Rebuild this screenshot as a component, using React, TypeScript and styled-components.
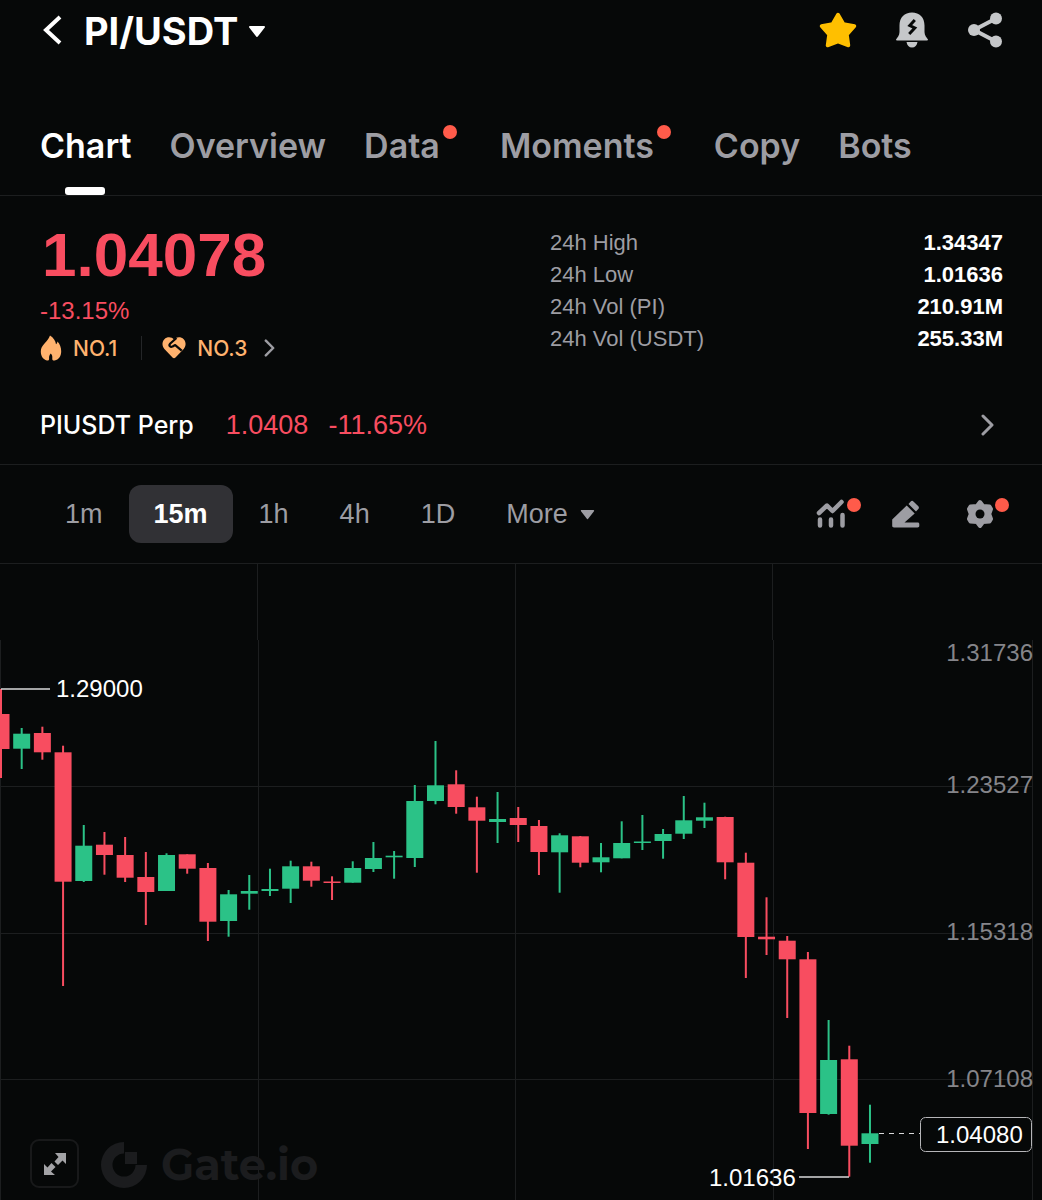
import React from "react";
import styled, { createGlobalStyle } from "styled-components";

const color = {
  page: "#060808",
  line: "#1c1e1f",
  white: "#ffffff",
  muted: "#9d9da3",
  axis: "#85858a",
  red: "#f84d60",
  green: "#2bc287",
  orange: "#ffb26e",
  badge: "#ff5b4a",
  pill: "#313135",
};

const sans = `Inter, "Liberation Sans", Arial, sans-serif`;
const figures = `"Liberation Sans", Arial, sans-serif`;

const GlobalStyle = createGlobalStyle`
  * { box-sizing: border-box; }
  body {
    margin: 0;
    background: ${color.page};
    color: ${color.white};
    font-family: ${sans};
  }
  button {
    margin: 0;
    padding: 0;
    border: 0;
    background: none;
    color: inherit;
    font: inherit;
    cursor: pointer;
  }
  a { color: inherit; text-decoration: none; }
  svg { display: block; flex: none; }
`;

const Header = styled.header`
  display: flex;
  align-items: center;
  justify-content: space-between;
  height: 60px;
  padding: 0 39px 0 40px;
`;

const HeaderGroup = styled.div<{ $gap: number }>`
  display: flex;
  align-items: center;
  gap: ${(p) => p.$gap}px;
`;

const PairButton = styled.button`
  display: flex;
  align-items: center;
  gap: 10px;
  padding-top: 2px;
  font-size: 38px;
  font-weight: 700;
  line-height: 48px;
`;

const Tabs = styled.nav`
  display: flex;
  align-items: flex-end;
  gap: 38px;
  height: 136px;
  padding: 0 40px;
  border-bottom: 1px solid ${color.line};
`;

const Tab = styled.a<{ $active?: boolean }>`
  position: relative;
  display: flex;
  height: 75px;
  font-size: 34px;
  font-weight: 600;
  line-height: 52px;
  color: ${(p) => (p.$active ? color.white : color.muted)};
  &::after {
    content: "";
    display: ${(p) => (p.$active ? "block" : "none")};
    position: absolute;
    left: calc(50% - 21px);
    bottom: 0;
    width: 40px;
    height: 8px;
    border-radius: 3px;
    background: ${color.white};
  }
`;

const TabDot = styled.span`
  width: 14px;
  height: 14px;
  margin: 5px 5px 0 3px;
  border-radius: 50%;
  background: ${color.badge};
`;

const Summary = styled.section`
  display: grid;
  grid-template-columns: 510px 1fr;
  padding: 27px 39px 0 40px;
  height: 190px;
`;

const Price = styled.div`
  padding-left: 2px;
  font-family: ${figures};
  font-size: 62px;
  font-weight: 700;
  line-height: 64px;
  color: ${color.red};
`;

const Change = styled.div`
  font-family: ${figures};
  font-size: 24px;
  line-height: 48px;
  color: ${color.red};
`;

const Ranks = styled.a`
  display: flex;
  align-items: center;
  height: 26px;
  color: ${color.orange};
  font-size: 21px;
  font-weight: 500;
`;

const Rank = styled.span`
  display: flex;
  align-items: center;
  gap: 11px;
`;

const RankDivider = styled.span`
  width: 1px;
  height: 24px;
  margin: 0 20px 0 24px;
  background: #242628;
`;

const RankArrow = styled.span`
  margin-left: 17px;
`;

const Stats = styled.dl`
  margin: 4px 0 0;
`;

const Stat = styled.div`
  display: flex;
  justify-content: space-between;
  font-family: ${figures};
  font-size: 22px;
  line-height: 32px;
  dt { color: ${color.muted}; }
  dd { margin: 0; font-weight: 700; }
`;

const PerpLink = styled.a`
  display: flex;
  align-items: center;
  height: 79px;
  padding: 0 48px 0 40px;
  border-bottom: 1px solid ${color.line};
  font-size: 25px;
  font-weight: 500;
`;

const PerpFigure = styled.span<{ $indent: number }>`
  margin-left: ${(p) => p.$indent}px;
  font-family: ${figures};
  font-size: 27px;
  font-weight: 400;
  color: ${color.red};
`;

const Push = styled.span`
  margin-left: auto;
`;

const Toolbar = styled.div`
  display: flex;
  align-items: center;
  justify-content: space-between;
  height: 99px;
  padding: 0 48px 0 40px;
  border-bottom: 1px solid ${color.line};
`;

const Intervals = styled.div`
  display: flex;
  gap: 1px;
`;

const Interval = styled.button<{ $active?: boolean }>`
  display: flex;
  align-items: center;
  gap: 12px;
  height: 58px;
  padding: 0 25px;
  border-radius: 12px;
  font-family: ${figures};
  font-size: 27px;
  font-weight: ${(p) => (p.$active ? 700 : 400)};
  color: ${(p) => (p.$active ? color.white : color.muted)};
  background: ${(p) => (p.$active ? color.pill : "transparent")};
`;

const Tools = styled.div`
  display: flex;
  gap: 46px;
`;

const Tool = styled.button`
  position: relative;
  color: ${color.muted};
`;

const ToolDot = styled.span`
  position: absolute;
  top: -1px;
  right: -15px;
  width: 14px;
  height: 14px;
  border-radius: 50%;
  background: ${color.badge};
`;

const ChartArea = styled.main`
  position: relative;
`;

const ChartSvg = styled.svg`
  width: 100%;
  height: auto;
  font-family: ${figures};
  font-size: 24px;
`;

const ExpandButton = styled.button`
  position: absolute;
  left: 30px;
  bottom: 12px;
  display: flex;
  align-items: center;
  justify-content: center;
  width: 49px;
  height: 49px;
  border: 2px solid #18191a;
  border-radius: 9px;
  background: ${color.page};
`;

const Caret = ({ width, height }: { width: number; height: number }) => (
  <svg width={width} height={height} viewBox="0 0 18 13" aria-hidden="true">
    <path d="M2 2h14L9 11z" fill="currentColor" stroke="currentColor" strokeWidth="2" strokeLinejoin="round" />
  </svg>
);

const Chevron = ({ size }: { size: number }) => (
  <svg width={size / 2 + 2} height={size} viewBox="0 0 13 22" fill="none" aria-hidden="true">
    <path d="M2 2l9 9-9 9" stroke={color.muted} strokeWidth="3" strokeLinecap="round" strokeLinejoin="round" />
  </svg>
);

const BackIcon = () => (
  <svg width="24" height="32" viewBox="0 0 24 32" fill="none">
    <path d="M20 3L6 16l14 13" stroke="#fff" strokeWidth="4" />
  </svg>
);

const StarIcon = () => (
  <svg width="38" height="38" viewBox="0 0 38 38">
    <path
      d="M19 3.500L24.500 13l11 2-7.500 8.500 1.500 11L19 30.500l-10.500 4 1.500-11L2.500 15l11-2z"
      fill="#ffbf00"
      stroke="#ffbf00"
      strokeWidth="3.500"
      strokeLinejoin="round"
    />
  </svg>
);

const BellIcon = () => (
  <svg width="32" height="36" viewBox="0 0 32 36">
    <path d="M3.500 13.500C3.500 5.500 8.500 0.500 16 0.500s12.500 5 12.500 13V20c0 3.500 2 5.500 3.300 7.200 0.500 0.800 0 1.300-0.800 1.300H1c-0.800 0-1.300-0.500-0.800-1.300C1.500 25.500 3.500 23.500 3.500 20z" fill="#c5c7c9" />
    <path d="M10.500 30h11c-0.500 3.500-2.500 5.500-5.500 5.500S11 33.500 10.500 30z" fill="#c5c7c9" />
    <path d="M18.800 8l-5 5.500 5 2.500-5.600 6" fill="none" stroke={color.page} strokeWidth="3" />
  </svg>
);

const ShareIcon = () => (
  <svg width="36" height="36" viewBox="0 0 36 36" fill="#c5c7c9">
    <path d="M29 6.500L7 18l22 11.500" fill="none" stroke="#c5c7c9" strokeWidth="4" />
    <circle cx="29" cy="6.500" r="6" />
    <circle cx="7" cy="18" r="6" />
    <circle cx="29" cy="29.500" r="6" />
  </svg>
);

const FlameIcon = () => (
  <svg width="22" height="26" viewBox="0 0 22 26" aria-hidden="true">
    <path
      d="M10 0.500c3.500 2.300 5.600 5.200 6 8.800 0.800-0.600 1.300-1.500 1.500-2.800 2.400 2.500 3.700 6 3.700 9.700 0 5-2.500 8.300-6.500 9.300-1.800 0.200-2.700-0.600-2.400-2.300 0.200-2-0.300-3.500-1.500-4.700-1.300 1.300-1.900 3-1.700 4.900 0.100 1.700-0.800 2.400-2.300 2C3.300 24.500 0.800 21.300 0.800 16.500c0-3.200 1.300-5.300 3.700-8C6.700 6 8.500 4 10 0.500z"
      fill={color.orange}
    />
  </svg>
);

const HeartIcon = () => (
  <svg width="24" height="22" viewBox="0 0 24 22" aria-hidden="true">
    <path d="M12 2.500C9.500-0.300 5-0.400 2.400 2.300c-2.600 2.800-2.500 7 0 9.600L10.500 20.500c1 1 2 1 3 0l8.200-8.600c2.500-2.700 2.500-6.900 0-9.600C19-0.400 14.500-0.300 12 2.500z" fill={color.orange} />
    <path d="M14.500 1L8 6.800c-1.500 2 0.500 3.800 2.600 2.600l2.600-1.300 6.500 5.500" fill="none" stroke={color.page} strokeWidth="2.200" strokeLinejoin="round" />
  </svg>
);

const IndicatorIcon = () => (
  <svg width="30" height="30" viewBox="0 0 30 30" fill="none" stroke="currentColor" strokeWidth="4.500" strokeLinecap="round" strokeLinejoin="round">
    <path d="M3 14l8-7.500 5.500 5.500L25.500 3" />
    <path d="M4 20.500v6M15 20.500v6M26.500 16v10.500" />
  </svg>
);

const PenIcon = () => (
  <svg width="28" height="30" viewBox="0 0 28 30" fill="currentColor">
    <path d="M14.700 6.500l8 8L12.500 23.500H25.500c1.300 0 1.800 0.600 1.800 1.800v1.500c0 1.200-0.500 1.700-1.800 1.700H2c-1.200 0-1.800-0.500-1.800-1.700V20.500z" />
    <path d="M16.500 5l2-2.300c1.200-1.200 2-1.200 3.200 0l4.400 4.400c1.100 1.200 1.100 2 0 3.200l-2.100 2.200z" />
  </svg>
);

const GearIcon = () => (
  <svg width="28" height="30" viewBox="0 0 28 30">
    <path
      d="M14 3l3 4 6.500 0.500 1.500 2.500-1.800 5 1.800 5-1.500 2.500-6.500 0.500-3 4-3-4-6.500-0.500L3 20l1.800-5L3 10l1.500-2.500L11 7z"
      fill="currentColor"
      stroke="currentColor"
      strokeWidth="4"
      strokeLinejoin="round"
    />
    <circle cx="14" cy="15" r="4.500" fill={color.page} />
  </svg>
);

const ExpandIcon = () => (
  <svg width="24" height="24" viewBox="0 0 24 24" fill="#a3a3a6">
    <path d="M12 1h11v11l-3.500-3.500-4.500 4.500-3.500-3.500 4-4.500z" />
    <path d="M12 23H1V12l3.500 3.500L8.500 11l4 4-4.500 4.500z" />
  </svg>
);

type Candle = ["up" | "down", number, number, number, number];

// Direction, then high, body top, body bottom and low on the chart's vertical scale.
const candles: Candle[] = [
  ["down", 125, 150, 185, 214],
  ["up", 164, 169.7, 184.7, 205],
  ["down", 162.7, 169, 188.3, 195.7],
  ["down", 181.7, 188.3, 317.7, 422],
  ["up", 261, 281.7, 317, 318],
  ["down", 268, 280.7, 291, 310.7],
  ["down", 273, 291, 313.7, 318],
  ["down", 288, 313, 328, 361],
  ["up", 289.3, 291, 327, 327],
  ["down", 290.3, 290.3, 304.7, 309.7],
  ["down", 299, 304, 357.7, 377],
  ["up", 326, 330.3, 357, 372.7],
  ["up", 311, 327, 329.7, 345.7],
  ["up", 304.7, 325, 327, 332],
  ["up", 296.7, 302.3, 324.7, 339],
  ["down", 297.7, 302.3, 316.7, 322.7],
  ["down", 312.3, 317.5, 319, 336],
  ["up", 297.3, 304, 318.7, 318.7],
  ["up", 278, 294, 305, 308],
  ["up", 287, 291.7, 293.3, 314.7],
  ["up", 221, 237, 294, 303],
  ["up", 177, 221.3, 237, 240.3],
  ["down", 206.3, 220.3, 243, 249.7],
  ["down", 232.7, 243.3, 256.7, 308.7],
  ["up", 228, 255, 258, 279],
  ["down", 243, 254, 261, 278],
  ["down", 256, 262, 288, 311],
  ["up", 269.3, 271.3, 288.3, 328.7],
  ["down", 272, 272.3, 298.7, 303.3],
  ["up", 279, 293.3, 298.3, 308.3],
  ["up", 257.3, 279, 294.3, 294.3],
  ["up", 251, 277.5, 279, 286],
  ["up", 265, 270, 277, 294.7],
  ["up", 232, 256.3, 269.7, 275],
  ["up", 238.7, 253.3, 256.7, 264],
  ["down", 252.7, 253, 298.3, 315.3],
  ["down", 288.7, 298.7, 373, 414],
  ["down", 333.3, 372.7, 375.3, 391],
  ["down", 372, 376.7, 395.3, 454],
  ["down", 388, 395.3, 549, 585],
  ["up", 456, 496, 550, 550.7],
  ["down", 481.7, 495.3, 581.7, 612.7],
  ["up", 540.7, 569.3, 580, 598.7],
];

const CANDLE_STEP = 20.69;
const CANDLE_WIDTH = 17;

const axisLabels = [
  { y: 97, text: "1.31736" },
  { y: 229, text: "1.23527" },
  { y: 376, text: "1.15318" },
  { y: 523, text: "1.07108" },
];

const CandleMark = ({ index, candle }: { index: number; candle: Candle }) => {
  const [direction, high, top, bottom, low] = candle;
  const x = 1 + index * CANDLE_STEP;
  return (
    <g fill={direction === "up" ? color.green : color.red}>
      <rect x={x - 1} y={high} width={2} height={low - high} />
      <rect x={x - CANDLE_WIDTH / 2} y={top} width={CANDLE_WIDTH} height={bottom - top} />
    </g>
  );
};

const PriceChart = () => (
  <ChartSvg viewBox="0 0 1042 636" role="img" aria-label="PI/USDT 15 minute candles">
    <g fill={color.line}>
      {[257, 515, 772].map((x) => (
        <rect key={x} x={x} y={0} width={1} height={76} />
      ))}
      {[0, 258, 515, 773, 1032].map((x) => (
        <rect key={x} x={x} y={76} width={1} height={560} />
      ))}
      {[222, 369, 515].map((y) => (
        <rect key={y} x={0} y={y} width={1032} height={1} />
      ))}
    </g>
    <g fill="#1b1c1e">
      <path d="M124 578a23 23 0 1 0 23 23h-11.500a11.500 11.500 0 1 1-11.500-11.500z" />
      <rect x="125" y="588" width="12" height="12" />
      <text x="161" y="616" fontFamily="Montserrat, Inter, sans-serif" fontSize="43" fontWeight="700">Gate.io</text>
    </g>
    {candles.map((candle, index) => (
      <CandleMark key={index} index={index} candle={candle} />
    ))}
    <g fill={color.axis} textAnchor="end">
      {axisLabels.map((label) => (
        <text key={label.text} x={1033} y={label.y}>{label.text}</text>
      ))}
    </g>
    <g stroke="#d8d8da" strokeWidth="1.500">
      <path d="M1 125h49" />
      <path d="M799 613h50" />
      <path d="M879 569.500h41" strokeDasharray="5 5" strokeWidth="1" />
    </g>
    <rect x="920.500" y="553.500" width="111" height="34" rx="5" fill={color.page} stroke="#b5b5b8" />
    <g fill={color.white}>
      <text x="56" y="133">1.29000</text>
      <text x="709" y="622">1.01636</text>
      <text x="936" y="579">1.04080</text>
    </g>
  </ChartSvg>
);

const tabs = [
  { label: "Chart", active: true },
  { label: "Overview" },
  { label: "Data", dot: true },
  { label: "Moments", dot: true },
  { label: "Copy" },
  { label: "Bots" },
];

const stats = [
  ["24h High", "1.34347"],
  ["24h Low", "1.01636"],
  ["24h Vol (PI)", "210.91M"],
  ["24h Vol (USDT)", "255.33M"],
];

const intervals = ["1m", "15m", "1h", "4h", "1D"];

export default function App() {
  return (
    <>
      <GlobalStyle />
      <Header>
        <HeaderGroup $gap={20}>
          <button aria-label="Back"><BackIcon /></button>
          <PairButton>PI/USDT<Caret width={18} height={13} /></PairButton>
        </HeaderGroup>
        <HeaderGroup $gap={39}>
          <button aria-label="Favorite"><StarIcon /></button>
          <button aria-label="Price alert"><BellIcon /></button>
          <button aria-label="Share"><ShareIcon /></button>
        </HeaderGroup>
      </Header>
      <Tabs>
        {tabs.map((tab) => (
          <Tab key={tab.label} href="#" $active={tab.active}>
            {tab.label}
            {tab.dot && <TabDot />}
          </Tab>
        ))}
      </Tabs>
      <Summary>
        <div>
          <Price>1.04078</Price>
          <Change>-13.15%</Change>
          <Ranks href="#">
            <Rank><FlameIcon />NO.1</Rank>
            <RankDivider />
            <Rank><HeartIcon />NO.3</Rank>
            <RankArrow><Chevron size={18} /></RankArrow>
          </Ranks>
        </div>
        <Stats>
          {stats.map(([label, value]) => (
            <Stat key={label}>
              <dt>{label}</dt>
              <dd>{value}</dd>
            </Stat>
          ))}
        </Stats>
      </Summary>
      <PerpLink href="#">
        PIUSDT Perp
        <PerpFigure $indent={32}>1.0408</PerpFigure>
        <PerpFigure $indent={20}>-11.65%</PerpFigure>
        <Push><Chevron size={22} /></Push>
      </PerpLink>
      <Toolbar>
        <Intervals>
          {intervals.map((interval) => (
            <Interval key={interval} $active={interval === "15m"}>{interval}</Interval>
          ))}
          <Interval>More<Caret width={15} height={11} /></Interval>
        </Intervals>
        <Tools>
          <Tool aria-label="Indicators"><IndicatorIcon /><ToolDot /></Tool>
          <Tool aria-label="Draw"><PenIcon /></Tool>
          <Tool aria-label="Chart settings"><GearIcon /><ToolDot /></Tool>
        </Tools>
      </Toolbar>
      <ChartArea>
        <PriceChart />
        <ExpandButton aria-label="Full screen"><ExpandIcon /></ExpandButton>
      </ChartArea>
    </>
  );
}
